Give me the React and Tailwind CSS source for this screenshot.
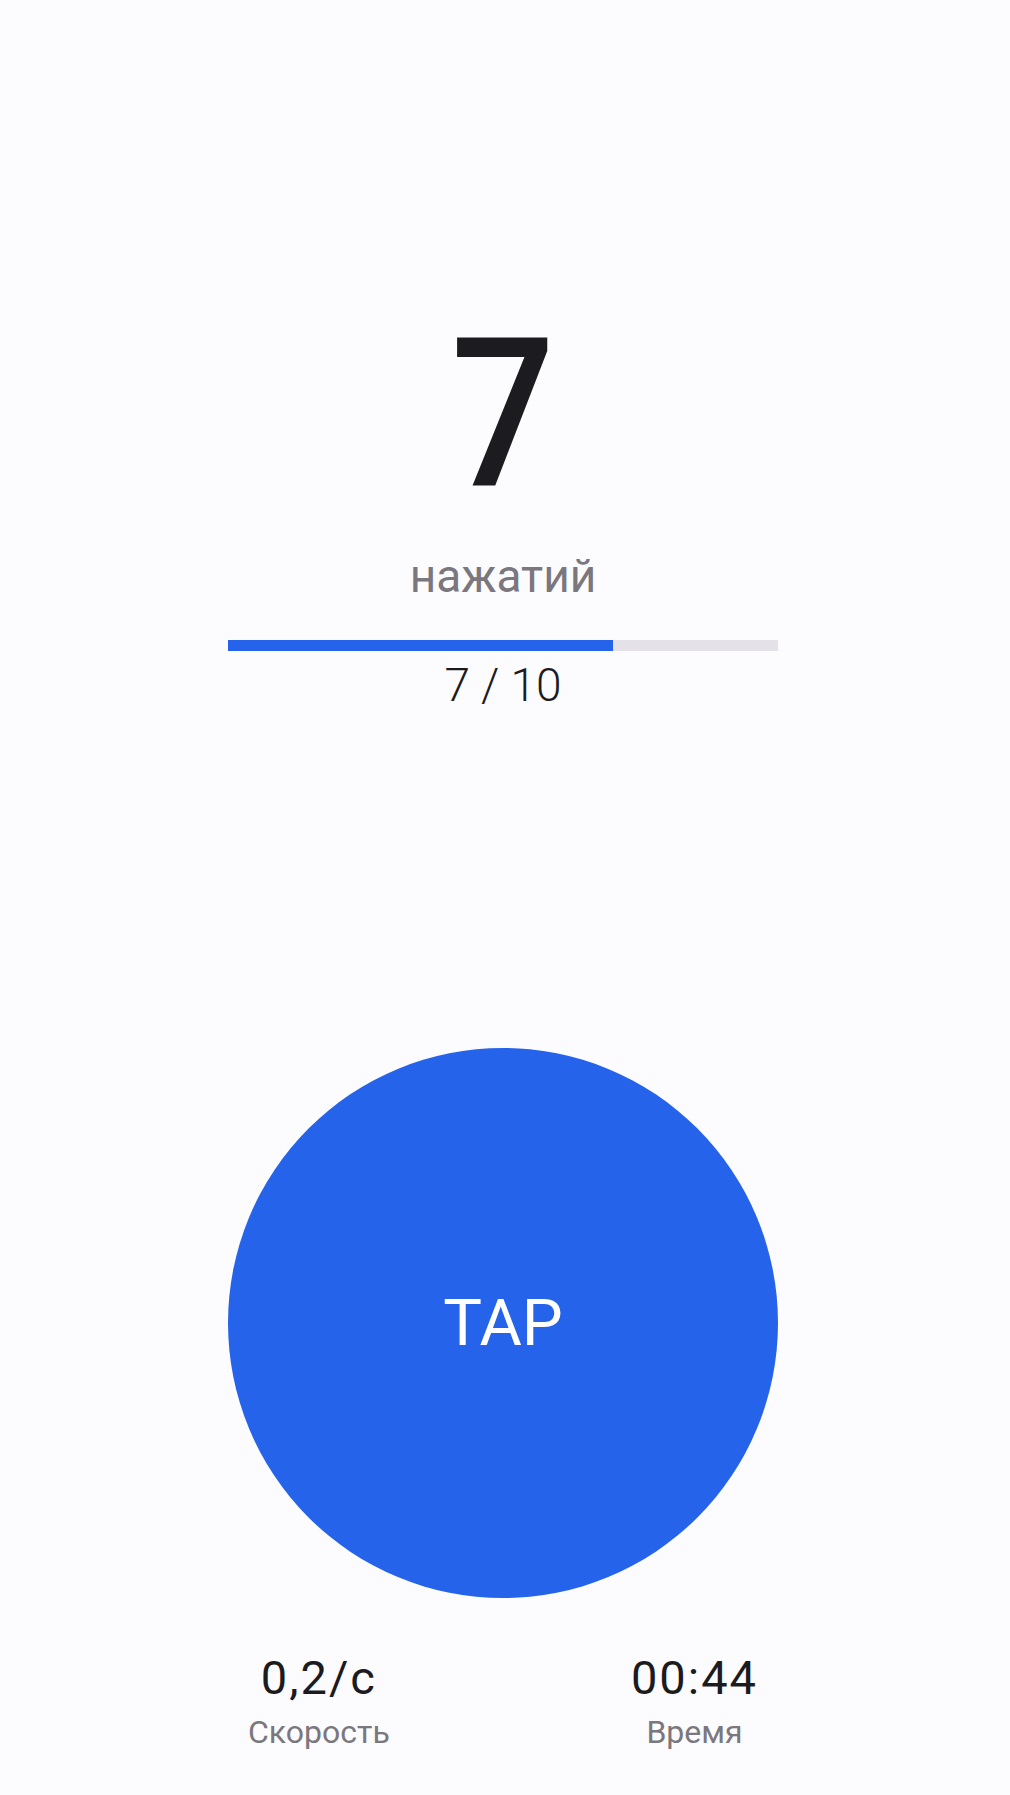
import React from 'react'

const font = { fontFamily: 'Roboto, "Noto Sans", sans-serif' }

const Stat = ({ value, label }) => (
  <div className="flex flex-col items-center">
    <div className="text-[47px] leading-none tracking-[2px] text-[#1c1b1f]">{value}</div>
    <div className="mt-[15px] text-[32px] leading-none text-[#7a777e]">{label}</div>
  </div>
)

const App = () => {
  const count = 7
  const goal = 10

  return (
    <div
      className="min-h-screen bg-[#fcfbfe] flex flex-col items-center pr-1 pt-[310px]"
      style={font}
    >
      {/* Counter */}
      <div className="inline-block scale-x-88 text-[208px] leading-none font-medium text-[#1c1b1f]">{count}</div>
      <div className="mt-[35px] text-[46px] leading-none text-[#7a777e]">нажатий</div>

      {/* Progress */}
      <div className="mt-[41px] w-[550px] h-[11px] bg-[#e5e1e8]">
        <div className="h-full bg-[#2563eb]" style={{ width: `${(count / goal) * 100}%` }} />
      </div>
      <div className="mt-[11px] text-[46px] leading-none font-light text-[#1c1b1f]">
        {count} / {goal}
      </div>

      {/* Tap button */}
      <button className="mt-[340px] w-[550px] h-[550px] rounded-full bg-[#2563eb] flex items-center justify-center">
        <span className="text-[65px] leading-none text-white">TAP</span>
      </button>

      {/* Stats */}
      <div className="mt-[56px] w-[550px] px-5 flex justify-between">
        <Stat value="0,2/с" label="Скорость" />
        <Stat value="00:44" label="Время" />
      </div>
    </div>
  )
}

export default App
